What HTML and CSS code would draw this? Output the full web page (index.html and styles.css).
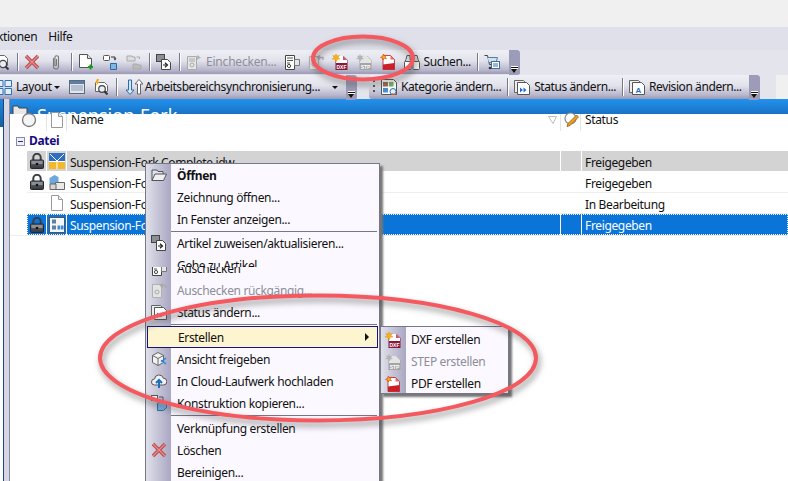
FILE: index.html
```html
<!DOCTYPE html>
<html lang="de">
<head>
<meta charset="utf-8">
<title>Vault</title>
<link rel="stylesheet" href="styles.css">
</head>
<body>
<svg class="defs" aria-hidden="true">
  <defs>
    <linearGradient id="lockg" x1="0" y1="0" x2="0" y2="1"><stop offset="0" stop-color="#6d7178"/><stop offset="1" stop-color="#33363c"/></linearGradient>
    <symbol id="mag" viewBox="0 0 16 16"><path d="M3.5 1.5h7l3 3v7h-10z" fill="#fff" stroke="#666"/><circle cx="9" cy="10" r="3.6" fill="#e8eef5" stroke="#444" stroke-width="1.3"/><path d="M11.5 12.5l3 3" stroke="#333" stroke-width="2"/></symbol>
    <symbol id="x" viewBox="0 0 16 16"><path d="M2 2l12 12M14 2L2 14" stroke="#b5474d" stroke-width="3.4"/><path d="M2 2l12 12M14 2L2 14" stroke="#ee8a88" stroke-width="1.4"/></symbol>
    <symbol id="clip" viewBox="0 0 16 16"><path d="M5.5 4v8.5a2.5 2.5 0 0 0 5 0V3.5a1.8 1.8 0 0 0-3.6 0V11a.8.8 0 0 0 1.6 0V5" fill="none" stroke="#777" stroke-width="1.1"/></symbol>
    <symbol id="docplus" viewBox="0 0 16 16"><path d="M1.5.5h8l4 4v9h-12z" fill="#fff" stroke="#555"/><path d="M9.5.5v4h4" fill="#e6e6e6" stroke="#555"/><path d="M12.5 10.5v5M10 13h5" stroke="#1a9a1a" stroke-width="2"/></symbol>
    <symbol id="copy" viewBox="0 0 16 16"><rect x="1.5" y="1.5" width="6" height="5" rx="1" fill="#fff" stroke="#555"/><path d="M9 3h4v2" fill="none" stroke="#333"/><path d="M11.5 4.5l1.5 2 1.5-2z" fill="#333"/><path d="M8.5 9.5h6v6h-6z" fill="#7fb6e4" stroke="#2a6ca8"/></symbol>
    <symbol id="copydis" viewBox="0 0 16 16"><path d="M1 2h5l1 1h2v4H1z" fill="#ddd" stroke="#aaa"/><path d="M10.5 3h3v2" fill="none" stroke="#aaa"/><path d="M7 10h4l1 1h3v4H7z" fill="#bbb" stroke="#aaa"/></symbol>
    <symbol id="link" viewBox="0 0 16 16"><rect x=".5" y=".5" width="8" height="7" fill="#8a8e96" stroke="#444"/><path d="M5.5 5.5h6l3 3v7h-9z" fill="#fff" stroke="#444"/><path d="M7 11h3.5M9 8.8l2.5 2.2L9 13.2" fill="none" stroke="#222" stroke-width="1.2"/></symbol>
    <symbol id="checkdis" viewBox="0 0 16 16"><path d="M1.5 2.5h9v13h-9z" fill="#e6e6e6" stroke="#aaa"/><path d="M3 5h6M3 7h6" stroke="#aaa"/><circle cx="6" cy="11" r="2" fill="none" stroke="#aaa"/><path d="M11 1l4 2.5-4 2.5z" fill="#b5b5b5"/></symbol>
    <symbol id="checkout" viewBox="0 0 16 16"><path d="M1.5 1.5h9v14h-9z" fill="#fff" stroke="#444"/><path d="M3 4h6M3 6.5h6M3 9h3" stroke="#555"/><circle cx="5" cy="12" r="1.6" fill="none" stroke="#444"/><path d="M10.5 5.5h5v6h-5z" fill="#e6e6e6" stroke="#777"/></symbol>
    <symbol id="undodis" viewBox="0 0 16 16"><path d="M1.5 2.5h9v13h-9z" fill="#e4e4e4" stroke="#b0b0b0"/><circle cx="6" cy="10" r="2" fill="none" stroke="#aaa"/><path d="M15 6V3.5H10M12 1.5l-2.5 2 2.5 2" fill="none" stroke="#aaa" stroke-width="1.3"/></symbol>
    <symbol id="dxf" viewBox="0 0 16 16"><path d="M3.5 2h8l4 4v10h-12z" fill="#8a1738"/><path d="M4 2h7l4 4v3H4z" fill="#fff"/><path d="M11 2v4h4" fill="#c25a75"/><path d="M4 0l1 2 2.5-.5L6 3.5 8 5l-2.5.3L4 8 3 5.3 0 5l2.2-1.5L.8 1.500 3 2z" fill="#f5b316" stroke="#d98a10" stroke-width=".4"/><text x="9.5" y="14.5" class="tiny">DXF</text></symbol>
    <symbol id="stp" viewBox="0 0 16 16"><path d="M3.5 2h8l4 4v10h-12z" fill="#a4a4a4"/><path d="M4 2h7l4 4v3H4z" fill="#e4e4e4"/><path d="M4 0l1 2 2.5-.5L6 3.5 8 5l-2.5.3L4 8 3 5.3 0 5l2.2-1.5L.8 1.500 3 2z" fill="#b4b4b4"/><text x="9.5" y="14.5" class="tiny">STP</text></symbol>
    <symbol id="pdf" viewBox="0 0 16 16"><path d="M3 1.5h7.5l4 4v10H3z" fill="#fff" stroke="#b01b22" stroke-width=".8"/><path d="M3 10.5l11.5-1.5v6.500H3z" fill="#c91f26"/><path d="M10.5 2v3.5h4" fill="#e46a6e"/><path d="M3.5 0l.8 1.8L6.5 1 5.2 3l1.3 1.800L4.300 4.300 3 6 2.700 4 .5 3.500 2.500 2.300z" fill="#f5b016" stroke="#d83a10" stroke-width=".6"/></symbol>
    <symbol id="bino" viewBox="0 0 16 16"><path d="M3 1.5h3v4h1v3H.8L2 5.5z" fill="#dfe2e6" stroke="#555"/><path d="M10 1.5h3l1 4 1.2 3H9v-3h1z" fill="#dfe2e6" stroke="#555"/><rect x=".5" y="7.5" width="6.5" height="8" rx="1" fill="#fff" stroke="#555"/><rect x="9" y="7.5" width="6.5" height="8" rx="1" fill="#fff" stroke="#555"/><path d="M7 9h2v3H7z" fill="#888"/></symbol>
    <symbol id="cart" viewBox="0 0 16 16"><path d="M.5 1.500h3l2 9h5" fill="none" stroke="#444"/><path d="M3.500 3.500h10l-1.500 5H5" fill="#cfe0ee" stroke="#5b7da0"/><rect x="7.500" y="7.500" width="8" height="7" fill="#fff" stroke="#3b6ea0"/><path d="M9 10h5M9 12h5" stroke="#3b6ea0"/><circle cx="6" cy="14" r="1.300" fill="#333"/></symbol>
    <symbol id="grid" viewBox="0 0 16 16"><path d="M.5 1.500h6.500v6H.5zM9 1.500h6.500v6H9zM.5 9.500h6.500v6H.5zM9 9.500h6.500v6H9z" fill="#e3eefa" stroke="#2f72b5"/></symbol>
    <symbol id="window" viewBox="0 0 16 16"><rect x=".5" y="1.500" width="15" height="13" fill="#dfe6ef" stroke="#5e6a78"/><rect x="1" y="2" width="14" height="3" fill="#5a7ea8"/><path d="M2 7h12M2 9h12M2 11h12" stroke="#8c9bb0"/></symbol>
    <symbol id="magstar" viewBox="0 0 16 16"><path d="M2.500 3.500h9l3 3v6h-12z" fill="#fff" stroke="#666"/><path d="M4 0L2 4h2L3 7l3.500-4H5l1-3z" fill="#f2a81a"/><circle cx="9" cy="10" r="3.300" fill="#e8eef5" stroke="#444" stroke-width="1.200"/><path d="M11.500 12.500l3 3" stroke="#333" stroke-width="2"/></symbol>
    <symbol id="sync" viewBox="0 0 18 16"><path d="M6.500 1v10h2.500l-4 4.500-4-4.500h2.500V1z" fill="#d7e7f6" stroke="#2a6bb0"/><path d="M12.500 15V5H10l4-4.500L18 5h-2.500v10z" fill="#fff" stroke="#666"/></symbol>
    <symbol id="kat" viewBox="0 0 16 16"><path d="M.5.500h12l3 3v12H.500z" fill="#fff" stroke="#555"/><rect x="2" y="3" width="5" height="4.500" fill="#a36a55"/><rect x="8" y="3" width="4.500" height="4.500" fill="#79b06a"/><rect x="2" y="9" width="5" height="4.500" fill="#4d8fd0"/><circle cx="12" cy="12.500" r="3" fill="#e8eef5" stroke="#2f72b5"/><path d="M11 15l3 1" stroke="#e2531c" stroke-width="1.500"/></symbol>
    <symbol id="statusi" viewBox="0 0 16 16"><path d="M.5 1.500h9l2 2v10h-11z" fill="#eee" stroke="#666"/><path d="M3.500 3.500h9l3 3v9h-12z" fill="#fff" stroke="#555"/><path d="M6 8.500l3 2.500-3 2.500zM9.500 8.500l3 2.500-3 2.500z" fill="#1f6fc4"/></symbol>
    <symbol id="revi" viewBox="0 0 16 16"><path d="M.5 1.500h9l2 2v10h-11z" fill="#eee" stroke="#666"/><path d="M3.500 3.500h9l3 3v9h-12z" fill="#fff" stroke="#555"/><text x="9.500" y="13.500" class="tinyb">A</text></symbol>
    <symbol id="lock" viewBox="0 0 16 16"><path d="M4.300 8V4.500a3.700 3.700 0 0 1 7.400 0V8" fill="none" stroke="#3a3d44" stroke-width="2"/><rect x="1.500" y="7" width="13" height="8.500" rx="1" fill="url(#lockg)" stroke="#25272c"/><rect x="2.500" y="8" width="11" height="3" fill="#8b8f96"/><circle cx="8" cy="11" r="1.300" fill="#111"/></symbol>
    <symbol id="idw" viewBox="0 0 16 16"><rect width="16" height="16" fill="#fff"/><path d="M0 0h16v8H0z" fill="#2f6fc0"/><path d="M0 9h16v7H0z" fill="#f4b92b"/><path d="M1 1l7 7 7-7M8 8v8" stroke="#fff" fill="none"/></symbol>
    <symbol id="part" viewBox="0 0 16 16"><path d="M.5 4l5-3 4 2v6l-4 3-5-2z" fill="#6ea7dc"/><path d="M6.500 8.500h9v7h-9z" fill="#e9e9e9" stroke="#666"/><path d="M1 10h6v5.500H1z" fill="#d4d4d4" stroke="#666"/></symbol>
    <symbol id="page" viewBox="0 0 16 16"><path d="M2.500.5h7l4 4v11h-11z" fill="#fff" stroke="#999"/><path d="M9.500.5v4h4" fill="#eee" stroke="#999"/></symbol>
    <symbol id="asm" viewBox="0 0 16 16"><rect x=".5" y=".5" width="15" height="15" fill="#f6f6f6" stroke="#555"/><rect x="3" y="2.500" width="4" height="4" fill="#5c7fa3"/><rect x="3" y="8.500" width="4" height="4" fill="#5c7fa3"/><rect x="8.500" y="8.500" width="2.800" height="4" fill="#3b8cd6"/><rect x="12" y="8.500" width="2.500" height="4" fill="#3b8cd6"/></symbol>
    <symbol id="circle" viewBox="0 0 16 16"><circle cx="8" cy="8" r="6.500" fill="#f5f5f5" stroke="#777" stroke-width="1.300"/></symbol>
    <symbol id="pencil" viewBox="0 0 16 16"><circle cx="6.500" cy="6.500" r="5.500" fill="#fff" stroke="#888" stroke-width="1.200"/><path d="M14.500 5L6 13.500l-3 1 1-3L12.500 3z" fill="#f0a01e" stroke="#8a5a10" stroke-width=".8"/></symbol>
    <symbol id="sort" viewBox="0 0 10 8"><path d="M.5.500h8L5 7.500z" fill="#fff" stroke="#bbb"/></symbol>
    <symbol id="folderopen" viewBox="0 0 16 16"><path d="M1 13.500V3h5l1 1.500h5V7" fill="#dfe3ea" stroke="#555"/><path d="M1 13.500L4 7h11.500l-3 6.500z" fill="#eef0f4" stroke="#555"/></symbol>
    <symbol id="cube" viewBox="0 0 16 16"><path d="M1.500 4.500L7 1.500l5.500 3v7L7 14.500l-5.500-3z" fill="#f2f2f2" stroke="#666"/><path d="M1.500 4.500L7 7.500l5.500-3M7 7.500v7" fill="none" stroke="#666"/><path d="M15 7l-3.500 3 3.500 3" fill="none" stroke="#2c86e0" stroke-width="1.600"/><circle cx="11" cy="10" r="1.200" fill="#2c86e0"/></symbol>
    <symbol id="cloud" viewBox="0 0 16 16"><path d="M3.500 12a3 3 0 0 1 0-6 4.500 4.500 0 0 1 8.800-.8A3.400 3.400 0 0 1 12.500 12z" fill="#f2f2f2" stroke="#555"/><path d="M8 15V8M5 10l3-3 3 3" fill="none" stroke="#1a6fc4" stroke-width="2"/></symbol>
    <symbol id="konstr" viewBox="0 0 16 16"><rect x=".5" y=".5" width="6" height="5" fill="#fff" stroke="#555"/><path d="M8 2h4v3" fill="none" stroke="#555"/><path d="M6.500 8.500l3-2h6v6l-3 3h-6z" fill="#79b1e3" stroke="#2a6ca8"/></symbol>
  </defs>
</svg>

<div class="top-gap"></div>
<div class="menubar"><span class="menu-cut">ktionen</span><span class="hilfe">Hilfe</span></div>

<div class="bar-row bar-row-one">
  <div class="toolbar tb-one">
    <svg class="ic"><use href="#mag"/></svg><i class="sep"></i>
    <svg class="ic"><use href="#x"/></svg>
    <svg class="ic"><use href="#clip"/></svg><i class="sep"></i>
    <svg class="ic"><use href="#docplus"/></svg>
    <svg class="ic"><use href="#copy"/></svg>
    <svg class="ic"><use href="#copydis"/></svg><i class="sep"></i>
    <svg class="ic"><use href="#link"/></svg><i class="sep"></i>
    <svg class="ic"><use href="#checkdis"/></svg>
    <span class="lbl dis">Einchecken...</span>
    <svg class="ic"><use href="#checkout"/></svg>
    <svg class="ic"><use href="#undodis"/></svg>
    <svg class="ic"><use href="#dxf"/></svg>
    <svg class="ic"><use href="#stp"/></svg>
    <svg class="ic"><use href="#pdf"/></svg>
    <svg class="ic"><use href="#bino"/></svg>
    <span class="lbl">Suchen...</span><i class="sep"></i>
    <svg class="ic"><use href="#cart"/></svg>
    <b class="grip"></b>
  </div>
</div>

<div class="bar-row bar-row-two">
  <div class="toolbar tb-two">
    <svg class="ic"><use href="#grid"/></svg>
    <span class="lbl">Layout</span><i class="caret caret-near"></i>
    <svg class="ic"><use href="#window"/></svg>
    <svg class="ic"><use href="#magstar"/></svg><i class="sep"></i>
    <svg class="ic ic-wide"><use href="#sync"/></svg>
    <span class="lbl">Arbeitsbereichsynchronisierung...</span><i class="caret caret-far"></i>
    <b class="grip"></b>
  </div>
  <div class="toolbar tb-three">
    <em class="dots"></em>
    <svg class="ic"><use href="#kat"/></svg>
    <span class="lbl">Kategorie ändern...</span><i class="sep"></i>
    <svg class="ic"><use href="#statusi"/></svg>
    <span class="lbl">Status ändern...</span><i class="sep"></i>
    <svg class="ic"><use href="#revi"/></svg>
    <span class="lbl">Revision ändern...</span>
    <b class="grip"></b>
  </div>
</div>

<div class="work">
  <div class="rail"></div>
  <div class="main">
    <div class="band">
      <svg class="band-folder" viewBox="0 0 16 10"><path d="M1 10V1h5l1 2h8v7z" fill="#e8e8e8" stroke="#444"/></svg>
      <span class="band-title">Suspension-Fork</span>
    </div>
    <div class="hdr">
      <div class="hc hc-state"><svg class="ic hdr-ic"><use href="#circle"/></svg></div>
      <div class="hc hc-type"><svg class="ic hdr-ic"><use href="#page"/></svg></div>
      <div class="hc hc-name"><span>Name</span><svg class="sort"><use href="#sort"/></svg></div>
      <div class="hc hc-pen"><svg class="ic hdr-ic"><use href="#pencil"/></svg></div>
      <div class="hc hc-status">Status</div>
    </div>
    <div class="group"><i class="expander"></i><strong>Datei</strong></div>
    <div class="rows">
      <div class="row row-grey">
        <div class="cell"><svg class="ic"><use href="#lock"/></svg></div>
        <div class="cell"><svg class="ic"><use href="#idw"/></svg></div>
        <div class="cell cell-text">Suspension-Fork Complete.idw</div>
        <div class="cell"></div>
        <div class="cell cell-text">Freigegeben</div>
      </div>
      <div class="row">
        <div class="cell"><svg class="ic"><use href="#lock"/></svg></div>
        <div class="cell"><svg class="ic"><use href="#part"/></svg></div>
        <div class="cell cell-text">Suspension-Fork Complete.ipt</div>
        <div class="cell"></div>
        <div class="cell cell-text">Freigegeben</div>
      </div>
      <div class="row">
        <div class="cell"></div>
        <div class="cell"><svg class="ic"><use href="#page"/></svg></div>
        <div class="cell cell-text">Suspension-Fork Notes.txt</div>
        <div class="cell"></div>
        <div class="cell cell-text">In Bearbeitung</div>
      </div>
      <div class="row row-sel">
        <div class="cell"><svg class="ic"><use href="#lock"/></svg></div>
        <div class="cell"><svg class="ic"><use href="#asm"/></svg></div>
        <div class="cell cell-text">Suspension-Fork Complete.iam</div>
        <div class="cell"></div>
        <div class="cell cell-text">Freigegeben</div>
      </div>
    </div>
  </div>
</div>

<div class="menu">
  <div class="mi mi-bold"><svg class="ic"><use href="#folderopen"/></svg><span>Öffnen</span></div>
  <div class="mi"><span class="noic">Zeichnung öffnen...</span></div>
  <div class="mi"><span class="noic">In Fenster anzeigen...</span></div>
  <div class="msep"></div>
  <div class="mi"><svg class="ic"><use href="#link"/></svg><span>Artikel zuweisen/aktualisieren...</span></div>
  <div class="mi mi-under"><svg class="ic"><use href="#checkout"/></svg><span>Auschecken</span></div>
  <div class="mi mi-dis"><svg class="ic"><use href="#undodis"/></svg><span>Auschecken rückgängig...</span></div>
  <div class="mi"><svg class="ic"><use href="#statusi"/></svg><span>Status ändern...</span></div>
  <div class="msep"></div>
  <div class="mi mi-hot"><span class="noic">Erstellen</span><i class="arrow"></i></div>
  <div class="mi"><svg class="ic"><use href="#cube"/></svg><span>Ansicht freigeben</span></div>
  <div class="mi"><svg class="ic"><use href="#cloud"/></svg><span>In Cloud-Laufwerk hochladen</span></div>
  <div class="mi"><svg class="ic"><use href="#konstr"/></svg><span>Konstruktion kopieren...</span></div>
  <div class="msep msep-last"></div>
  <div class="mi"><span class="noic">Verknüpfung erstellen</span></div>
  <div class="mi"><svg class="ic"><use href="#x"/></svg><span>Löschen</span></div>
  <div class="mi"><span class="noic">Bereinigen...</span></div>
  <div class="mi-over"><div class="mi"><span class="noic">Gehe zu Artikel</span></div></div>
</div>

<div class="submenu">
  <div class="si"><svg class="ic"><use href="#dxf"/></svg><span>DXF erstellen</span></div>
  <div class="si si-dis"><svg class="ic"><use href="#stp"/></svg><span>STEP erstellen</span></div>
  <div class="si"><svg class="ic"><use href="#pdf"/></svg><span>PDF erstellen</span></div>
</div>

<svg class="marks" viewBox="0 0 788 481" aria-hidden="true">
  <ellipse cx="363" cy="58" rx="50" ry="21.5"/>
  <ellipse cx="318" cy="358" rx="218" ry="62.5"/>
</svg>
</body>
</html>
```

FILE: styles.css
```css
* { box-sizing: border-box; }
html, body { margin: 0; padding: 0; }
body {
  position: relative;
  width: 788px;
  height: 481px;
  overflow: hidden;
  background: #fff;
  color: #111;
  font: 12px/16px "Noto Sans", Tahoma, sans-serif;
  letter-spacing: -.35px;
}
.defs { position: absolute; width: 0; height: 0; }
.tiny { font: bold 5px "Liberation Sans", sans-serif; fill: #fff; text-anchor: middle; letter-spacing: 0; }
.tinyb { font: bold 8px "Liberation Sans", sans-serif; fill: #1f6fc4; text-anchor: middle; letter-spacing: 0; }
.ic { display: block; flex: none; width: 16px; height: 16px; }
.ic-wide { width: 18px; margin: 0 -2px 0 2px; }

.top-gap { height: 27px; background: #f0f0f0; }
.menubar {
  display: flex;
  height: 23px;
  padding-bottom: 3px;
  align-items: center;
  background: #dfe0ea;
}
.menu-cut { margin-left: -3px; }
.hilfe { margin-left: 11px; }

.bar-row { display: flex; height: 25px; background: #e3e4ec; }
.bar-row-two { height: 24px; background: linear-gradient(90deg, #e3e4ec 0, #e3e4ec 776px, #f0f0f0 776px); }
.toolbar {
  display: flex;
  flex: none;
  align-items: center;
  gap: 8px;
  height: 24px;
  background: linear-gradient(#efeff5 0, #e2e2ec 45%, #b5b4ca 85%, #9a98b4 100%);
  white-space: nowrap;
}
.tb-one { width: 526px; margin-left: -6px; }
.tb-two { width: 360px; margin-left: -4px; }
.tb-three { width: 391px; margin-left: 13px; padding-left: 4px; border-radius: 3px 0 0 3px; }
.sep { flex: none; width: 1px; height: 18px; margin: 0 -2px 0 -1px; background: #77778f; box-shadow: 1px 0 0 #fff; }
.lbl { margin: 0 -1px 0 -4px; letter-spacing: -.42px; }
.dis { color: #8d8d9a; letter-spacing: -.2px; }
.caret { flex: none; width: 0; height: 0; border: 3px solid transparent; border-top: 3px solid #111; border-bottom: 0; }
.caret-near { margin-left: -5px; margin-right: 1px; }
.caret-far { margin-left: 5px; }
.grip {
  position: relative;
  flex: none;
  width: 11px;
  height: 25px;
  margin-left: auto;
  background: #9d9cb8;
  border-radius: 0 3px 3px 0;
}
.grip::before {
  content: "";
  position: absolute;
  left: 2px;
  bottom: 6px;
  width: 7px;
  height: 3px;
  background: linear-gradient(#fff 0 1px, #111 1px 2px, #fff 2px);
}
.grip::after {
  content: "";
  position: absolute;
  left: 2px;
  bottom: 2px;
  width: 0;
  height: 0;
  border: 3.5px solid transparent;
  border-top: 4px solid #111;
  border-bottom: 0;
}
.dots { flex: none; width: 2px; height: 14px; margin-right: -2px; background: repeating-linear-gradient(#555 0 2px, transparent 2px 5px); }

.work { display: flex; height: 382px; }
.rail {
  flex: none;
  width: 10px;
  background:
    linear-gradient(#1d86e0, #14609f) 0 0 / 3px 28px no-repeat,
    linear-gradient(#fff, #fff) 0 28px / 3px 100% no-repeat,
    linear-gradient(#19487f, #19487f) 3px 0 / 1px 100% no-repeat,
    #d6d6e4;
  border-right: 1px solid #8a8a98;
}
.main { flex: 1; min-width: 0; }
.band {
  display: flex;
  height: 15px;
  overflow: hidden;
  padding-left: 2px;
  background: linear-gradient(#2192ee, #1a72c4);
}
.band-folder { flex: none; width: 16px; height: 10px; margin-top: 6px; }
.band-title { margin: 5px 0 0 9px; color: #fff; font-size: 18px; line-height: 22px; letter-spacing: 0; }
.hdr { display: flex; height: 17px; }
.hc { display: flex; flex: none; padding-left: 5px; border-right: 1px solid #e4e4e4; line-height: 12px; }
.hc-state { width: 37px; padding-left: 11px; }
.hc-type { width: 20px; padding-left: 2px; }
.hc-name { width: 494px; padding-left: 4px; justify-content: space-between; }
.hc-pen { width: 20px; padding-left: 3px; }
.hc-status { border: 0; padding-left: 4px; }
.hdr-ic { margin-top: -2px; }
.sort { flex: none; width: 10px; height: 8px; margin: 2px 2px 0 0; }
.group { display: flex; align-items: center; gap: 4px; height: 20px; padding: 0 0 0 6px; }
.group strong { color: #1a0a80; font-weight: 700; }
.expander {
  flex: none;
  width: 9px;
  height: 9px;
  border: 1px solid #8a8aa0;
  background: linear-gradient(#33336b, #33336b) center / 5px 1px no-repeat, #eef;
}
.rows { padding-left: 17px; box-shadow: 0 1px 0 #eee; }
.row {
  display: grid;
  grid-template-columns: 19px 19px 493px 20px 1fr;
  column-gap: 1px;
  height: 21px;
  border-bottom: 1px solid #eee;
}
.cell { display: flex; align-items: center; padding-left: 2px; min-width: 0; overflow: hidden; white-space: nowrap; }
.cell-text { padding: 3px 0 0 3px; }
.row-grey { border-bottom-color: #fff; }
.row-grey .cell { background: #d3d3d3; }
.row-sel { border-bottom: 0; outline: 1px dotted #fff; outline-offset: -1px; }
.row-sel .cell { background: #0a74d8; color: #fff; }
.row-sel .cell-text { padding-top: 2px; }

.menu {
  position: absolute;
  left: 145px;
  top: 163px;
  width: 235px;
  height: 330px;
  border: 1px solid #76768c;
  background: linear-gradient(90deg, #e0e0ea 0, #a9a7c2 25px, #fbf9ff 25px);
  box-shadow: 3px 3px 2px #777;
}
.mi { display: flex; align-items: center; gap: 10px; height: 22px; padding-left: 5px; }
.mi span { padding-top: 2px; }
.mi .noic { margin-left: 26px; }
.mi-bold { font-weight: 700; }
.mi-dis { color: #8d8d9a; }
.mi-under { margin-top: 3px; }
.msep { height: 2px; margin: 0 2px 0 25px; border-bottom: 1px solid #76768c; }
.msep-last { margin-bottom: 1px; }
.mi-hot {
  position: relative;
  width: 231px;
  margin: 1px 0 0 1px;
  padding-left: 4px;
  background: #fdf5cf;
  border: 1px solid #14147a;
}
.arrow {
  position: absolute;
  right: 8px;
  top: 6px;
  width: 0;
  height: 0;
  border: 4px solid transparent;
  border-left: 4px solid #111;
  border-right: 0;
}
.mi-over {
  position: absolute;
  left: 0;
  top: 90px;
  width: 100%;
  height: 13px;
  overflow: hidden;
  background: linear-gradient(90deg, #e0e0ea 0, #a9a7c2 25px, #fbf9ff 25px);
}

.submenu {
  position: absolute;
  left: 380px;
  top: 326px;
  width: 129px;
  height: 68px;
  padding-top: 2px;
  border: 1px solid #76768c;
  background: linear-gradient(90deg, #e0e0ea 0, #a9a7c2 25px, #fbf9ff 25px);
  box-shadow: 3px 3px 2px #777;
}
.si { display: flex; align-items: center; gap: 10px; height: 22px; padding-left: 4px; }
.si-dis { color: #8d8d9a; }

.marks {
  position: absolute;
  left: 0;
  top: 0;
  width: 788px;
  height: 481px;
  fill: none;
  stroke: #f4595f;
  stroke-width: 4px;
  filter: drop-shadow(2px 4px 3px rgba(60, 60, 60, .55));
  pointer-events: none;
}
```
